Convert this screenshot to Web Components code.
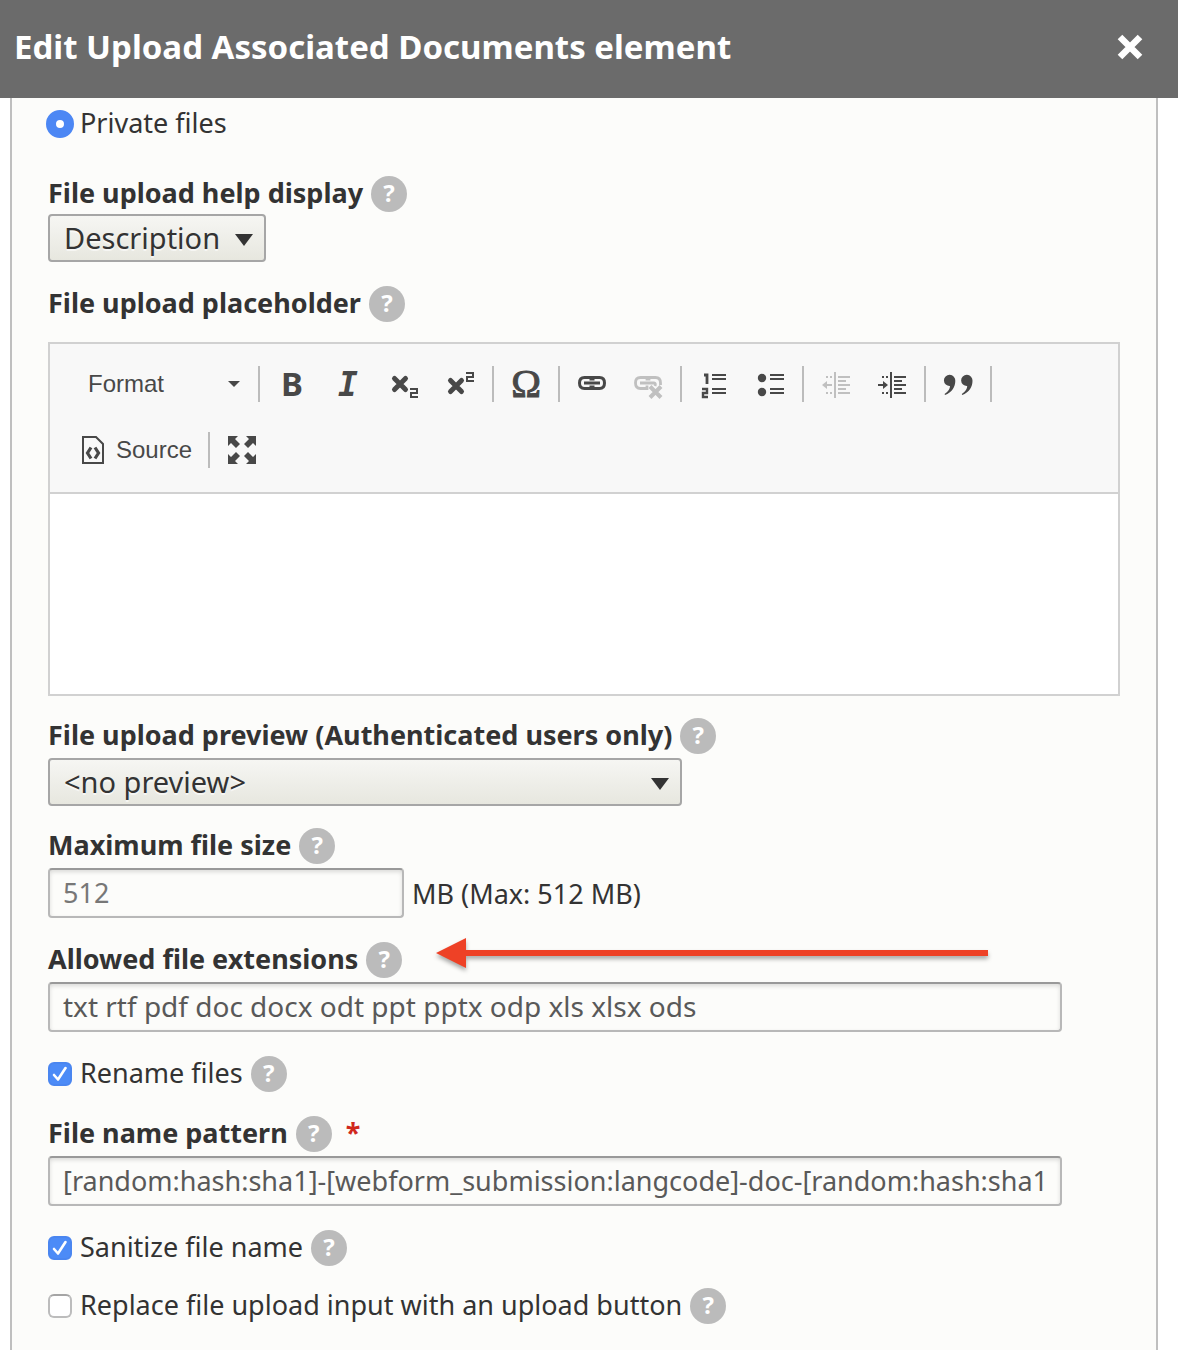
<!DOCTYPE html>
<html lang="en">
<head>
<meta charset="utf-8">
<title>Edit Upload Associated Documents element</title>
<style>
  body { margin: 0; background: #fff; color: #333; font: 27px/33px "Noto Sans", "Open Sans", sans-serif; }
</style>
</head>
<body>
<dialog-page></dialog-page>
<script>
  const define = (name, html, setup) => {
    const template = document.createElement('template');
    template.innerHTML = html;
    customElements.define(name, class extends HTMLElement {
      constructor() {
        super();
        this.attachShadow({ mode: 'open' }).append(template.content.cloneNode(true));
      }
      connectedCallback() {
        if (setup && !this.ready) { this.ready = true; setup(this, this.shadowRoot); }
      }
    });
  };

  const ICONS = {
    close: '<path d="M6 6L26 26M26 6L6 26" stroke="currentColor" stroke-width="6.500"/>',
    sub: '<path d="M6.500 10.500L17.500 21.500M17.500 10.500L6.500 21.500" stroke="currentColor" stroke-width="5" stroke-linecap="round"/><path d="M22 21H29V25H23V29H30" fill="none" stroke="currentColor" stroke-width="2"/>',
    sup: '<path d="M6.500 12.500L17.500 23.500M17.500 12.500L6.500 23.500" stroke="currentColor" stroke-width="5" stroke-linecap="round"/><path d="M22 5H29V9H23V13H30" fill="none" stroke="currentColor" stroke-width="2"/>',
    link: '<path d="M15 12.500V9.500H8.500Q3.500 9.500 3.500 15T8.500 20.500H15V17.500M17 12.500V9.500H23.500Q28.500 9.500 28.500 15T23.500 20.500H17V17.500M8 15H24" fill="none" stroke="currentColor" stroke-width="3"/>',
    unlink: '<path d="M15 12.500V9.500H8.500Q3.500 9.500 3.500 15T8.500 20.500H15V17.500M17 12.500V9.500H23.500Q28.500 9.500 28.500 15V17M8 15H22Q24 15 23 18" fill="none" stroke="currentColor" stroke-width="2.800"/><path d="M18 18.500L29 29.500M29 18.500L18 29.500" stroke="currentColor" stroke-width="4"/>',
    ol: '<path d="M6 7H9V16" fill="none" stroke="currentColor" stroke-width="2.800"/><path d="M4 21H9V25H5V29H10" fill="none" stroke="currentColor" stroke-width="2.400"/><path d="M14 7H28M14 11H28M14 21H28M14 25H28" stroke="currentColor" stroke-width="2"/>',
    ul: '<circle cx="8" cy="10" r="4.200" fill="currentColor"/><circle cx="8" cy="24" r="4.200" fill="currentColor"/><path d="M16 7H30M16 11H30M16 21H30M16 25H30" stroke="currentColor" stroke-width="2"/>',
    outdent: '<path d="M15 4V30M18 9H30M18 13H26M18 17H30M18 21H26M18 25H30M6 9H8M10 9H12M6 25H8M10 25H12M5 17H12" stroke="currentColor" stroke-width="2"/><path d="M2 17L7 13V21Z" fill="currentColor"/>',
    indent: '<path d="M15 4V30M18 9H30M18 13H26M18 17H30M18 21H26M18 25H30M6 9H8M10 9H12M6 25H8M10 25H12M2 17H9" stroke="currentColor" stroke-width="2"/><path d="M12 17L7 13V21Z" fill="currentColor"/>',
    quote: '<path d="M13.300 12.800C13.300 19 10 24.500 3 27L2.600 26C6.500 23.500 8 20.800 8 18A5.700 5.600 0 1 1 13.300 12.800ZM30.500 12.800C30.500 19 27.200 24.500 20.200 27L19.800 26C23.700 23.500 25.200 20.800 25.200 18A5.700 5.600 0 1 1 30.500 12.800Z" fill="currentColor"/>',
    source: '<path d="M7 3H20L27 10V29H7Z" fill="none" stroke="currentColor" stroke-width="2"/><path d="M15 13.500L11.500 19L15 24.500M19 13.500L22.500 19L19 24.500" fill="none" stroke="currentColor" stroke-width="3.200"/>',
    maximize: '<path d="M2 2H12L9 5L14 10L10 14L5 9L2 12ZM30 2V12L27 9L22 14L18 10L23 5L20 2ZM2 30V20L5 23L10 18L14 22L9 27L12 30ZM30 30H20L23 27L18 22L22 18L27 23L30 20Z" fill="currentColor"/>'
  };

  define('ui-icon', `
    <style>
      :host { display: block; width: 32px; height: 32px; }
      svg { display: block; width: 100%; height: 100%; }
    </style>
    <svg viewBox="0 0 32 32" aria-hidden="true"></svg>`,
    (el, root) => { root.querySelector('svg').innerHTML = ICONS[el.getAttribute('name')]; });

  define('help-tip', `
    <style>
      :host { display: block; flex: none; }
      button { display: block; width: 36px; height: 36px; padding: 0 0 2px; border: 0; border-radius: 50%;
        background: #bbb; color: #fff; font: bold 24px/34px "Noto Sans", sans-serif; text-align: center; }
    </style>
    <button type="button" aria-label="Help">?</button>`);

  define('field-heading', `
    <style>
      :host { display: flex; gap: 8px; height: 36px; font-weight: bold; }
    </style>
    <slot></slot><help-tip></help-tip><slot name="after"></slot>`);

  define('select-field', `
    <style>
      :host { display: block; }
      .box { display: inline-grid; align-items: center; max-width: 100%; margin-top: var(--control-gap, 4px); vertical-align: top; }
      select, .arrow { grid-area: 1 / 1; }
      select { appearance: none; box-sizing: border-box; width: var(--select-width, auto); max-width: 100%; height: 48px; margin: 0;
        padding: 0 43px 0 14px; border: 2px solid #a6a6a6; border-radius: 4px; color: #333;
        background: linear-gradient(#f6f6f3, #e7e7df); font: 29px/40px "Noto Sans", sans-serif; text-shadow: 0 2px #fff9; }
      .arrow { justify-self: end; width: 18px; height: 12px; margin: 4px 13px 0 0; background: #333;
        clip-path: polygon(0 0, 100% 0, 50% 100%); pointer-events: none; }
    </style>
    <field-heading><label for="control"></label></field-heading>
    <div class="box"><select id="control"><option></option></select><span class="arrow"></span></div>`,
    (el, root) => {
      root.querySelector('label').textContent = el.getAttribute('label');
      root.querySelector('option').textContent = el.getAttribute('value');
    });

  define('text-field', `
    <style>
      :host { display: block; position: relative; }
      .line { display: flex; align-items: center; gap: 8px; margin-top: 4px; }
      .required { margin-left: 6px; color: #d0281c; }
      input { box-sizing: border-box; width: 100%; max-width: var(--input-width, 1014px); height: 50px; margin: 0;
        padding: 0 10px 2px 13px; border: 2px solid #b8b8b8; border-top-color: #999; border-radius: 4px;
        background: #fcfcfa; box-shadow: inset 0 2px 4px #0002; color: #595959; font: var(--input-size, 27px)/36px "Noto Sans", sans-serif; }
      input::placeholder { color: #777; opacity: 1; }
    </style>
    <field-heading><label for="control"></label></field-heading>
    <div class="line"><input id="control" type="text"><slot></slot></div>
    <slot name="annotation"></slot>`,
    (el, root) => {
      root.querySelector('label').textContent = el.getAttribute('label');
      const input = root.querySelector('input');
      input.value = el.getAttribute('value') || '';
      input.placeholder = el.getAttribute('placeholder') || '';
      if (el.hasAttribute('required')) {
        input.required = true;
        root.querySelector('field-heading').append(Object.assign(document.createElement('span'), { className: 'required', slot: 'after', textContent: '*' }));
      }
    });

  define('choice-field', `
    <style>
      :host { display: flex; gap: 8px; height: 36px; }
      .mark { display: grid; place-items: center; align-self: center; flex: none; }
      input, svg { grid-area: 1 / 1; }
      input { appearance: none; box-sizing: border-box; width: 24px; height: 24px; margin: 0; border: 2px solid #bcbcbc; border-top-color: #a5a5a5;
        border-radius: 6px; background: #fff; }
      input:checked { border-color: #4a86f0; background: #4c8bf7; }
      svg { width: 24px; height: 24px; pointer-events: none; visibility: hidden; }
      input:checked + svg { visibility: visible; }
      :host([type="radio"]) { gap: 6px; }
      :host([type="radio"]) .mark { margin-left: -2px; }
      :host([type="radio"]) input { width: 28px; height: 28px; border: 10px solid #4c87f4; border-radius: 50%; background: #fff; }
      :host([type="radio"]) svg { display: none; }
    </style>
    <span class="mark"><input id="control"><svg viewBox="0 0 24 24" aria-hidden="true"><path d="M6 13L10 17.500L17.500 6" fill="none" stroke="#fff" stroke-width="2.600" stroke-linecap="round" stroke-linejoin="round"/></svg></span>
    <label for="control"></label>`,
    (el, root) => {
      const input = root.querySelector('input');
      input.type = el.getAttribute('type') || 'checkbox';
      input.checked = el.hasAttribute('checked');
      root.querySelector('label').textContent = el.getAttribute('label');
      if (el.hasAttribute('help')) root.append(document.createElement('help-tip'));
    });

  define('tool-button', `
    <style>
      :host { display: block; }
      button { display: flex; align-items: center; justify-content: center; gap: 8px; height: 56px; padding: 0 12px; border: 0;
        background: none; color: #484848; font: 24px/32px "Liberation Sans", Arial, sans-serif; }
      button:disabled { color: #c0c0c0; }
      slot::slotted(span) { display: block; width: 32px; text-align: center; }
    </style>
    <button type="button"><slot></slot></button>`,
    (el, root) => {
      const button = root.querySelector('button');
      button.disabled = el.hasAttribute('disabled');
      button.setAttribute('aria-label', el.getAttribute('label'));
      if (el.hasAttribute('icon')) {
        const icon = document.createElement('ui-icon');
        icon.setAttribute('name', el.getAttribute('icon'));
        button.prepend(icon);
      }
    });

  define('rich-editor', `
    <style>
      :host { display: block; }
      .frame { margin-top: 20px; border: 2px solid #d1d1d1; background: #fff; }
      .toolbar { display: flex; flex-wrap: wrap; row-gap: 10px; padding: 12px 14px 14px; border-bottom: 2px solid #d1d1d1; background: #f8f8f8; }
      .group { display: flex; align-items: center; }
      .group.divided::after { content: ""; width: 2px; height: 36px; margin: 0 4px; background: #bcbcbc; }
      .format { display: flex; align-items: center; justify-content: space-between; box-sizing: border-box; width: 190px; height: 56px;
        padding: 0 14px 0 24px; border: 0; background: none; color: #484848; font: 24px/32px "Liberation Sans", Arial, sans-serif; }
      .format::after { content: ""; width: 12px; height: 6px; background: #484848; clip-path: polygon(0 0, 100% 0, 50% 100%); }
      .bold { font: bold 33px/32px "Noto Sans", sans-serif; }
      .italic { padding-top: 2px; font: italic bold 33px/32px "DejaVu Sans Mono", monospace; }
      .omega { font: 40px/32px "Liberation Serif", serif; -webkit-text-stroke: 1px; }
      textarea { display: block; box-sizing: border-box; width: 100%; height: 200px; padding: 20px; border: 0; resize: none; background: #fff;
        font: 26px/40px "Liberation Sans", Arial, sans-serif; }
    </style>
    <field-heading><label for="control"></label></field-heading>
    <div class="frame">
      <div class="toolbar" role="toolbar" aria-label="Editor toolbar">
        <div class="group divided"><button class="format" type="button">Format</button></div>
        <div class="group divided">
          <tool-button label="Bold"><span class="bold">B</span></tool-button>
          <tool-button label="Italic"><span class="italic">I</span></tool-button>
          <tool-button label="Subscript" icon="sub"></tool-button>
          <tool-button label="Superscript" icon="sup"></tool-button>
        </div>
        <div class="group divided"><tool-button label="Special character"><span class="omega">Ω</span></tool-button></div>
        <div class="group divided">
          <tool-button label="Link" icon="link"></tool-button>
          <tool-button label="Unlink" icon="unlink" disabled></tool-button>
        </div>
        <div class="group divided">
          <tool-button label="Numbered list" icon="ol"></tool-button>
          <tool-button label="Bulleted list" icon="ul"></tool-button>
        </div>
        <div class="group divided">
          <tool-button label="Decrease indent" icon="outdent" disabled></tool-button>
          <tool-button label="Increase indent" icon="indent"></tool-button>
        </div>
        <div class="group divided"><tool-button label="Block quote" icon="quote"></tool-button></div>
        <div class="group">
          <div class="group divided"><tool-button label="Source" icon="source">Source</tool-button></div>
          <tool-button label="Maximize" icon="maximize"></tool-button>
        </div>
      </div>
      <textarea id="control"></textarea>
    </div>`,
    (el, root) => { root.querySelector('label').textContent = el.getAttribute('label'); });

  define('callout-arrow', `
    <style>
      :host { display: block; position: absolute; top: -7px; left: 384px; width: 560px; pointer-events: none; }
      svg { display: block; width: 100%; height: 40px; filter: drop-shadow(0 3px 2px #0005); }
    </style>
    <svg viewBox="0 0 560 40" aria-hidden="true"><path d="M4 18L34 3V15H556V21H34V33Z" fill="#ee4126"/></svg>`);

  define('dialog-bar', `
    <style>
      :host { display: flex; align-items: center; justify-content: space-between; box-sizing: border-box; height: 98px; padding: 0 32px 5px 14px;
        background: #6b6b6b; color: #fff; }
      h1 { margin: 0; font-size: 33px; line-height: 40px; font-weight: bold; }
      button { display: block; padding: 0; border: 0; background: none; color: inherit; }
    </style>
    <h1><slot></slot></h1>
    <button type="button" aria-label="Close"><ui-icon name="close"></ui-icon></button>`);

  define('dialog-page', `
    <style>
      :host { display: flex; flex-direction: column; min-height: 100vh; }
      form { flex: 1; display: flex; flex-direction: column; gap: 24px; margin: 0 20px 0 10px; padding: 8px 36px 26px;
        border: solid #bfbfbf; border-width: 0 2px; background: #fcfcfa; }
      .group { display: flex; flex-direction: column; gap: 22px; }
      .location { margin-bottom: 10px; }
      .help-display { --control-gap: 2px; }
      .preview { --select-width: 634px; }
      .size { --input-width: 356px; }
      .extensions { --input-size: 28px; }
    </style>
    <dialog-bar>Edit Upload Associated Documents element</dialog-bar>
    <form>
      <choice-field class="location" type="radio" label="Private files" checked></choice-field>
      <select-field class="help-display" label="File upload help display" value="Description"></select-field>
      <div class="group">
        <rich-editor label="File upload placeholder"></rich-editor>
        <select-field class="preview" label="File upload preview (Authenticated users only)" value="&lt;no preview&gt;"></select-field>
        <text-field class="size" label="Maximum file size" placeholder="512">MB (Max: 512 MB)</text-field>
      </div>
      <text-field class="extensions" label="Allowed file extensions" value="txt rtf pdf doc docx odt ppt pptx odp xls xlsx ods"><callout-arrow slot="annotation"></callout-arrow></text-field>
      <choice-field label="Rename files" checked help></choice-field>
      <text-field label="File name pattern" required value="[random:hash:sha1]-[webform_submission:langcode]-doc-[random:hash:sha1"></text-field>
      <div class="group">
        <choice-field label="Sanitize file name" checked help></choice-field>
        <choice-field label="Replace file upload input with an upload button" help></choice-field>
      </div>
    </form>`);
</script>
</body>
</html>
